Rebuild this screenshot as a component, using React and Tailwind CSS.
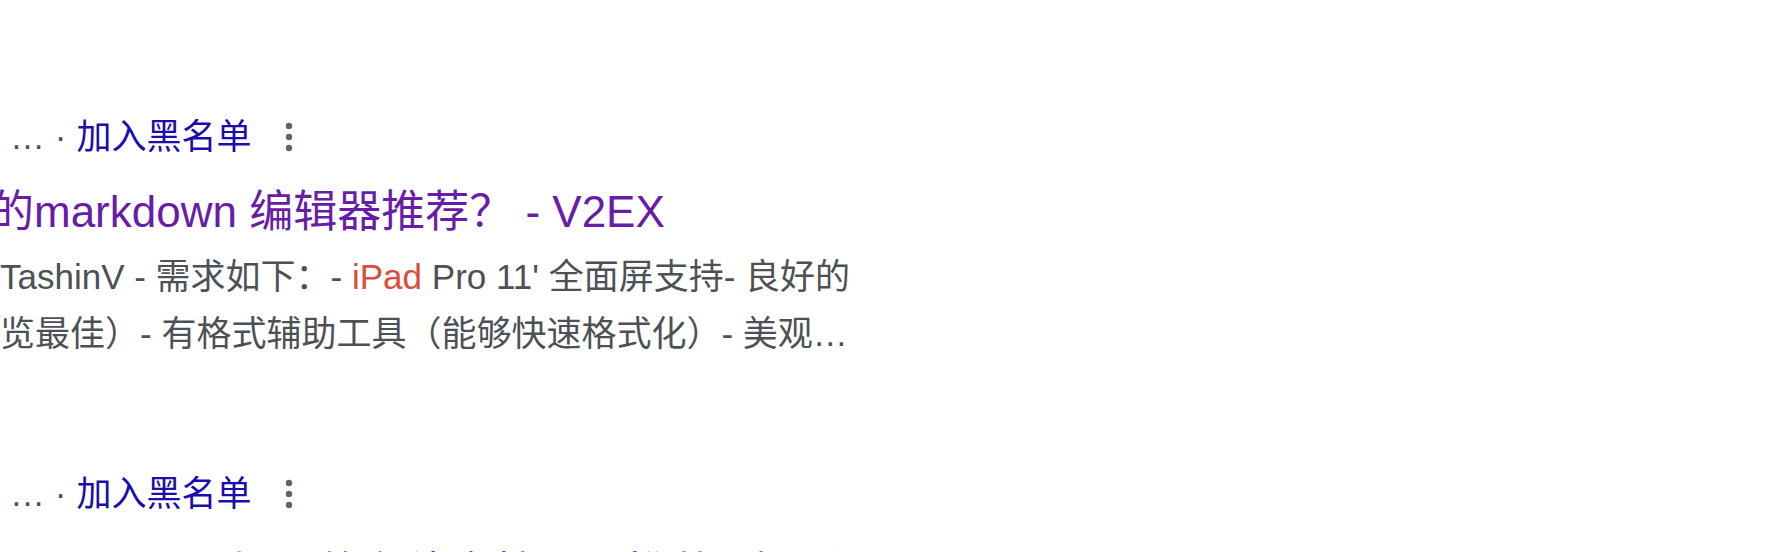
import React from "react";

const font = { fontFamily: '"Liberation Sans", "Noto Sans CJK SC", sans-serif' };

const MoreIcon = () => (
  <svg width="8" height="30" viewBox="0 0 8 30" className="ml-[34px]">
    <circle cx="4" cy="4" r="3.2" fill="#5f6368" />
    <circle cx="4" cy="15" r="3.2" fill="#5f6368" />
    <circle cx="4" cy="26" r="3.2" fill="#5f6368" />
  </svg>
);

const Crumb = () => (
  <div className="flex items-center h-[40px] text-[35px] leading-[40px] whitespace-nowrap">
    <span className="ml-[10px] text-[#4d5156]">… · </span>
    <span className="ml-[10px] text-[#1a0dab]">加入黑名单</span>
    <MoreIcon />
  </div>
);

const Result = ({ title, visited, lines, titleGap = "mt-[27px]" }) => (
  <div>
    <Crumb />
    <div
      className={`${titleGap} ml-[-10px] text-[44px] leading-[56px] whitespace-nowrap ${
        visited ? "text-[#681da8]" : "text-[#1a0dab]"
      }`}
    >
      {title}
    </div>
    <div className="mt-[8px] text-[35px] leading-[57px] text-[#4d5156] whitespace-nowrap">
      {lines.map((l, i) => (
        <div key={i}>{l}</div>
      ))}
    </div>
  </div>
);

export default function App() {
  return (
    <div className="w-[1778px] h-[552px] overflow-hidden bg-white" style={font}>
      <div className="pt-[117px] flex flex-col gap-[112px]">
        <Result
          visited
          title="的markdown 编辑器推荐？ - V2EX"
          lines={[
            <span key="a">
              TashinV - 需求如下：- <span className="text-[#dc4b3c]">iPad</span> Pro 11' 全面屏支持- 良好的
            </span>,
            "览最佳）- 有格式辅助工具（能够快速格式化）- 美观…",
          ]}
        />
        <Result
          titleGap="mt-[32px]"
          title="Mac/iPad 上好用的在线文档工具推荐 - 知乎"
          lines={["", ""]}
        />
      </div>
    </div>
  );
}
